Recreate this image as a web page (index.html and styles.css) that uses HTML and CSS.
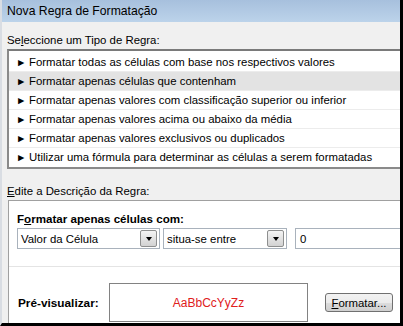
FILE: index.html
```html
<!DOCTYPE html>
<html lang="pt">
<head>
    <meta charset="UTF-8">
    <title>Nova Regra de Formatação</title>
    <link rel="stylesheet" href="styles.css">
</head>
<body>
    <div class="window">
        <div class="title-bar">Nova Regra de Formatação</div>

        <div class="dialog-body">
            <div class="section-label">Se<u>l</u>eccione um Tipo de Regra:</div>
            <ul class="rule-list">
                <li><span class="arrow">&#9658;</span>Formatar todas as células com base nos respectivos valores</li>
                <li class="selected"><span class="arrow">&#9658;</span>Formatar apenas células que contenham</li>
                <li><span class="arrow">&#9658;</span>Formatar apenas valores com classificação superior ou inferior</li>
                <li><span class="arrow">&#9658;</span>Formatar apenas valores acima ou abaixo da média</li>
                <li><span class="arrow">&#9658;</span>Formatar apenas valores exclusivos ou duplicados</li>
                <li><span class="arrow">&#9658;</span>Utilizar uma fórmula para determinar as células a serem formatadas</li>
            </ul>

            <div class="section-label second"><u>E</u>dite a Descrição da Regra:</div>
            <div class="desc-panel">
                <div class="desc-top">
                    <div class="desc-title">F<u>o</u>rmatar apenas células com:</div>
                    <div class="cond-row">
                        <div class="combo combo-field">
                            <span class="combo-text">Valor da Célula</span>
                            <span class="combo-btn"><span class="caret"></span></span>
                        </div>
                        <div class="combo combo-op">
                            <span class="combo-text">situa-se entre</span>
                            <span class="combo-btn"><span class="caret"></span></span>
                        </div>
                        <div class="text-input">0</div>
                    </div>
                </div>
                <div class="preview-row">
                    <div class="preview-label">Pré-visualizar:</div>
                    <div class="preview-box">AaBbCcYyZz</div>
                    <div class="format-btn"><u>F</u>ormatar...</div>
                </div>
            </div>
        </div>
    </div>
</body>
</html>
```

FILE: styles.css
```css
body {
    margin: 0;
    font-family: 'Liberation Sans', Arial, sans-serif;
    font-size: 11.4px;
    color: #000;
    background-color: #fff;
}
.window {
    width: 398px;
    height: 323px;
    border-left: 2px solid #d9dde3;
    border-right: 3px solid #000;
    border-bottom: 3px solid #000;
    background-color: #f0f0f0;
    overflow: hidden;
    display: flex;
    flex-direction: column;
}
.title-bar {
    height: 22px;
    line-height: 22px;
    padding-left: 5px;
    font-size: 12.2px;
    background: linear-gradient(to bottom, #a7c0dd, #bcd3ea);
    flex-shrink: 0;
}
.dialog-body {
    padding-left: 5px;
    display: flex;
    flex-direction: column;
}
.section-label {
    height: 14px;
    line-height: 14px;
    margin-top: 11px;
    margin-bottom: 2px;
}
.section-label.second {
    margin-top: 15px;
    margin-bottom: 2px;
}
.rule-list {
    list-style: none;
    margin: 0;
    padding: 2px 0 1px 0;
    width: 420px;
    border: 2px solid #8a8a8a;
    border-right: none;
    border-top-color: #7a7a7a;
    background-color: #fff;
}
.rule-list li {
    height: 18px;
    line-height: 18px;
    border-bottom: 1px solid #ececec;
    padding-left: 7px;
    white-space: nowrap;
}
.rule-list li:last-child {
    border-bottom: none;
}
.rule-list li.selected {
    background-color: #e3e3e3;
}
.arrow {
    display: inline-block;
    width: 13px;
    font-size: 10.5px;
}
.desc-panel {
    width: 420px;
    height: 130px;
    border: 1px solid #a0a0a0;
    border-right: none;
    border-bottom: none;
    margin-left: 1px;
    background-color: #fff;
    display: flex;
    flex-direction: column;
}
.desc-top {
    padding: 10px 0 0 8px;
    height: 55px;
    border-bottom: 1px solid #e4e4e4;
}
.desc-title {
    font-weight: bold;
    font-size: 11.6px;
    height: 16px;
    line-height: 16px;
}
.cond-row {
    display: flex;
    margin-top: 1px;
}
.combo,
.text-input {
    height: 19px;
    border: 1px solid #a9b2bc;
    background-color: #fff;
    display: flex;
    align-items: center;
    box-sizing: content-box;
}
.combo-field {
    width: 141px;
}
.combo-op {
    width: 122px;
    margin-left: 3px;
}
.text-input {
    width: 120px;
    margin-left: 8px;
    padding-left: 4px;
}
.combo-text {
    flex: 1;
    padding-left: 3px;
}
.combo-btn {
    width: 15px;
    height: 15px;
    margin-right: 2px;
    border: 1px solid #8e8f8f;
    border-radius: 2px;
    background: linear-gradient(to bottom, #f4f4f4, #d2d2d2);
    display: flex;
    align-items: center;
    justify-content: center;
}
.caret {
    width: 0;
    height: 0;
    border-left: 3.5px solid transparent;
    border-right: 3.5px solid transparent;
    border-top: 4px solid #000;
    margin-top: 1px;
}
.preview-row {
    display: flex;
    align-items: center;
    padding: 16px 0 0 9px;
}
.preview-label {
    font-weight: bold;
    font-size: 11.8px;
    width: 91px;
}
.preview-box {
    width: 197px;
    height: 37px;
    border: 1px solid #828282;
    color: #e0201c;
    font-size: 12px;
    display: flex;
    align-items: center;
    justify-content: center;
}
.format-btn {
    width: 66px;
    height: 17px;
    margin-left: 17px;
    border: 1px solid #707070;
    border-radius: 3px;
    background: linear-gradient(to bottom, #f2f2f2 0%, #ebebeb 50%, #dddddd 51%, #cfcfcf 100%);
    display: flex;
    align-items: center;
    justify-content: center;
}
```
